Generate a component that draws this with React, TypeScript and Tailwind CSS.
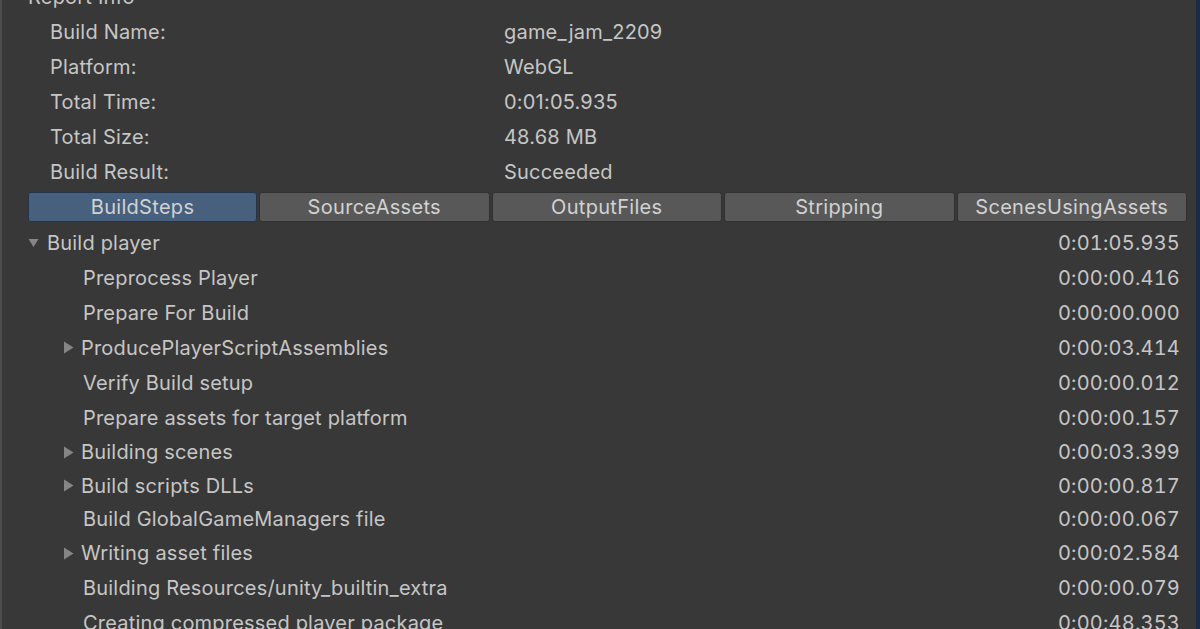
import React from "react";

const info: [string, string][] = [
  ["Build Name:", "game_jam_2209"],
  ["Platform:", "WebGL"],
  ["Total Time:", "0:01:05.935"],
  ["Total Size:", "48.68 MB"],
  ["Build Result:", "Succeeded"],
];

const tabs = ["BuildSteps", "SourceAssets", "OutputFiles", "Stripping", "ScenesUsingAssets"];

type Row = { label: string; time: string; depth: number; arrow?: "down" | "right"; h: number };

const rows: Row[] = [
  { label: "Build player", time: "0:01:05.935", depth: 0, arrow: "down", h: 34 },
  { label: "Preprocess Player", time: "0:00:00.416", depth: 1, h: 35 },
  { label: "Prepare For Build", time: "0:00:00.000", depth: 1, h: 35 },
  { label: "ProducePlayerScriptAssemblies", time: "0:00:03.414", depth: 1, arrow: "right", h: 35 },
  { label: "Verify Build setup", time: "0:00:00.012", depth: 1, h: 35 },
  { label: "Prepare assets for target platform", time: "0:00:00.157", depth: 1, h: 35 },
  { label: "Building scenes", time: "0:00:03.399", depth: 1, arrow: "right", h: 34 },
  { label: "Build scripts DLLs", time: "0:00:00.817", depth: 1, arrow: "right", h: 33 },
  { label: "Build GlobalGameManagers file", time: "0:00:00.067", depth: 1, h: 34 },
  { label: "Writing asset files", time: "0:00:02.584", depth: 1, arrow: "right", h: 34 },
  { label: "Building Resources/unity_builtin_extra", time: "0:00:00.079", depth: 1, h: 35 },
  { label: "Creating compressed player package", time: "0:00:48.353", depth: 1, h: 35 },
];

function Arrow({ dir }: { dir: "down" | "right" }) {
  return dir === "down" ? (
    <svg width="11" height="10" viewBox="0 0 11 10" className="shrink-0">
      <path d="M0.5 1 L10.5 1 L5.5 9 Z" fill="#858585" />
    </svg>
  ) : (
    <svg width="11" height="13" viewBox="0 0 11 13" className="shrink-0">
      <path d="M1 0.5 L10.5 6.5 L1 12.5 Z" fill="#858585" />
    </svg>
  );
}

export default function App() {
  return (
    <div
      className="w-[1200px] h-[629px] overflow-hidden bg-[#383838] flex text-[#c6c6c6] text-[20px] tracking-[0.2px]"
      style={{ fontFamily: "Inter, 'Noto Sans', sans-serif" }}
    >
      <div className="w-[2px] bg-[#4c4c4c] shrink-0" />
      <div className="flex-1 flex flex-col pl-[26px] pr-[9px]">
        <div className="h-[35px] mt-[-21px] flex items-center shrink-0">Report Info</div>
        {info.map(([k, v]) => (
          <div key={k} className="h-[35px] flex items-center shrink-0">
            <div className="w-[476px] pl-[22px]">{k}</div>
            <div>{v}</div>
          </div>
        ))}
        <div className="mt-[3px] h-[30px] flex shrink-0 gap-[2px] text-[#d2d2d2] text-[20px] tracking-[0.3px]">
          {tabs.map((t, i) => (
            <div
              key={t}
              className={
                i === 0
                  ? "w-[229px] flex items-center justify-center rounded-[3px] bg-[#46607e] border border-[#27354a]"
                  : "flex-1 flex items-center justify-center rounded-[3px] bg-[#585858] border border-[#303030]"
              }
            >
              {t}
            </div>
          ))}
        </div>
        <div className="mt-[4px] flex flex-col pr-[7px]">
          {rows.map((r) => (
            <div key={r.label} className="flex items-center shrink-0" style={{ height: r.h }}>
              <div
                className={r.depth === 0 ? "flex items-center gap-[8px] pl-[0px]" : r.arrow ? "flex items-center gap-[7px] pl-[35px]" : "flex items-center pl-[55px]"}
              >
                {r.arrow && <Arrow dir={r.arrow} />}
                <span>{r.label}</span>
              </div>
              <div className="ml-auto tabular-nums tracking-[0.2px]">{r.time}</div>
            </div>
          ))}
        </div>
      </div>
      <div className="w-[4px] bg-[#1d2a45] shrink-0" />
    </div>
  );
}
